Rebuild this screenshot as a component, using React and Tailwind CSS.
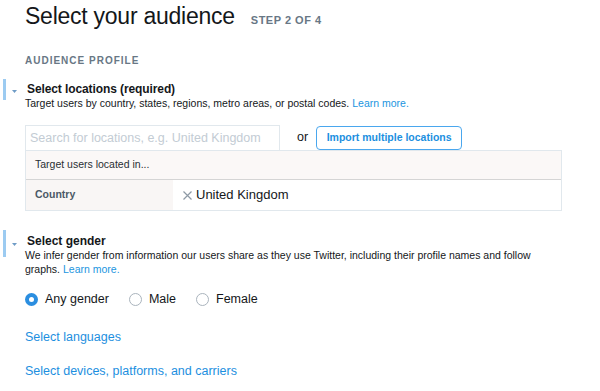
import React, { useState } from "react";

const Caret = ({ className }) => (
  <svg width="5" height="3" viewBox="0 0 5 3" className={className}>
    <path d="M0 0 L5 0 L2.5 3 Z" fill="#6f9cc6" />
  </svg>
);

const Radio = ({ label, checked, onClick }) => (
  <button className="flex items-center gap-[7px]" onClick={onClick}>
    {checked ? (
      <span className="flex h-[13px] w-[13px] items-center justify-center rounded-full bg-[#2b8ee0]">
        <span className="h-[5px] w-[5px] rounded-full bg-white" />
      </span>
    ) : (
      <span className="h-[13px] w-[13px] rounded-full border border-[#aab4bd] bg-white" />
    )}
    <span className="text-[12.5px] leading-[16px] text-[#14171a]">{label}</span>
  </button>
);

const App = () => {
  const [gender, setGender] = useState("any");

  return (
    <div className="h-[391px] w-[600px] overflow-hidden bg-white pl-[25px] font-['Liberation_Sans',Arial,sans-serif] text-[#14171a]">
      <div className="mt-[2px] flex h-[28px] items-baseline gap-[16px]">
        <h1 className="text-[23px] leading-[28px] tracking-[-0.25px] text-[#14171a]">
          Select your audience
        </h1>
        <span className="text-[11px] font-bold tracking-[0.5px] text-[#687785]">
          STEP 2 OF 4
        </span>
      </div>

      <div className="mt-[25px] text-[10px] font-bold leading-[12px] tracking-[1px] text-[#687785]">
        AUDIENCE PROFILE
      </div>

      {/* locations */}
      <div className="-ml-[22px] mt-[12px] flex items-start">
        <div className="-mb-[3px] h-[21px] w-[3px] bg-[#9ccbf1]" />
        <Caret className="ml-[6px] mt-[11px]" />
        <h2 className="ml-[10px] mt-[3px] text-[12px] font-bold leading-[15px] tracking-[-0.1px]">
          Select locations (required)
        </h2>
      </div>
      <p className="text-[10.5px] leading-[13px] text-[#14171a]">
        Target users by country, states, regions, metro areas, or postal codes.{" "}
        <a className="text-[#1b95e0]">Learn more.</a>
      </p>

      <div className="mt-[15px] flex items-center">
        <input
          className="h-[25px] w-[255px] border border-b-0 border-[#e1e8ed] px-[4px] text-[12.5px] outline-none placeholder:text-[#c3ccd4]"
          placeholder="Search for locations, e.g. United Kingdom"
        />
        <span className="ml-[17px] text-[12.5px]">or</span>
        <button className="ml-[8px] h-[24px] w-[146px] rounded-[4px] border border-[#4aa7ee] text-[10.5px] font-bold text-[#1b8fe0]">
          Import multiple locations
        </button>
      </div>

      <div className="w-[537px] border border-[#e1e8ed]">
        <div className="flex h-[29px] items-center border-b border-[#d5d5d5] bg-[#fbf8f7] pl-[9px] text-[10.5px] text-[#292f33]">
          Target users located in...
        </div>
        <div className="flex h-[30px] items-center">
          <div className="flex h-full w-[147px] items-center bg-[#f9f6f5] pl-[9px] text-[10.5px] font-bold text-[#4b5966]">
            Country
          </div>
          <div className="ml-[10px] flex items-center gap-[4px]">
            <svg width="9" height="9" viewBox="0 0 9 9">
              <path d="M0.5 0.5 L8.5 8.5 M8.5 0.5 L0.5 8.5" stroke="#8e9aa5" strokeWidth="1.2" />
            </svg>
            <span className="text-[13px] text-[#14171a]">United Kingdom</span>
          </div>
        </div>
      </div>

      {/* gender */}
      <div className="-ml-[22px] mt-[19px] flex items-start">
        <div className="-mb-[8px] h-[27px] w-[3px] bg-[#9ccbf1]" />
        <Caret className="ml-[6px] mt-[13px]" />
        <h2 className="ml-[10px] mt-[4px] text-[12px] font-bold leading-[15px]">
          Select gender
        </h2>
      </div>
      <div className="text-[10.5px] leading-[13.5px] text-[#14171a]">
        <p>
          We infer gender from information our users share as they use Twitter, including their profile names and follow
        </p>
        <p>
          graphs. <a className="text-[#1b95e0]">Learn more.</a>
        </p>
      </div>

      <div className="mt-[15px] flex items-center gap-[20px]">
        <Radio label="Any gender" checked={gender === "any"} onClick={() => setGender("any")} />
        <Radio label="Male" checked={gender === "male"} onClick={() => setGender("male")} />
        <Radio label="Female" checked={gender === "female"} onClick={() => setGender("female")} />
      </div>

      <div className="mt-[22px] text-[12.5px] leading-[16px] text-[#1d8fe0]">Select languages</div>
      <div className="mt-[18px] text-[12.5px] leading-[16px] text-[#1d8fe0]">
        Select devices, platforms, and carriers
      </div>
    </div>
  );
};

export default App;
